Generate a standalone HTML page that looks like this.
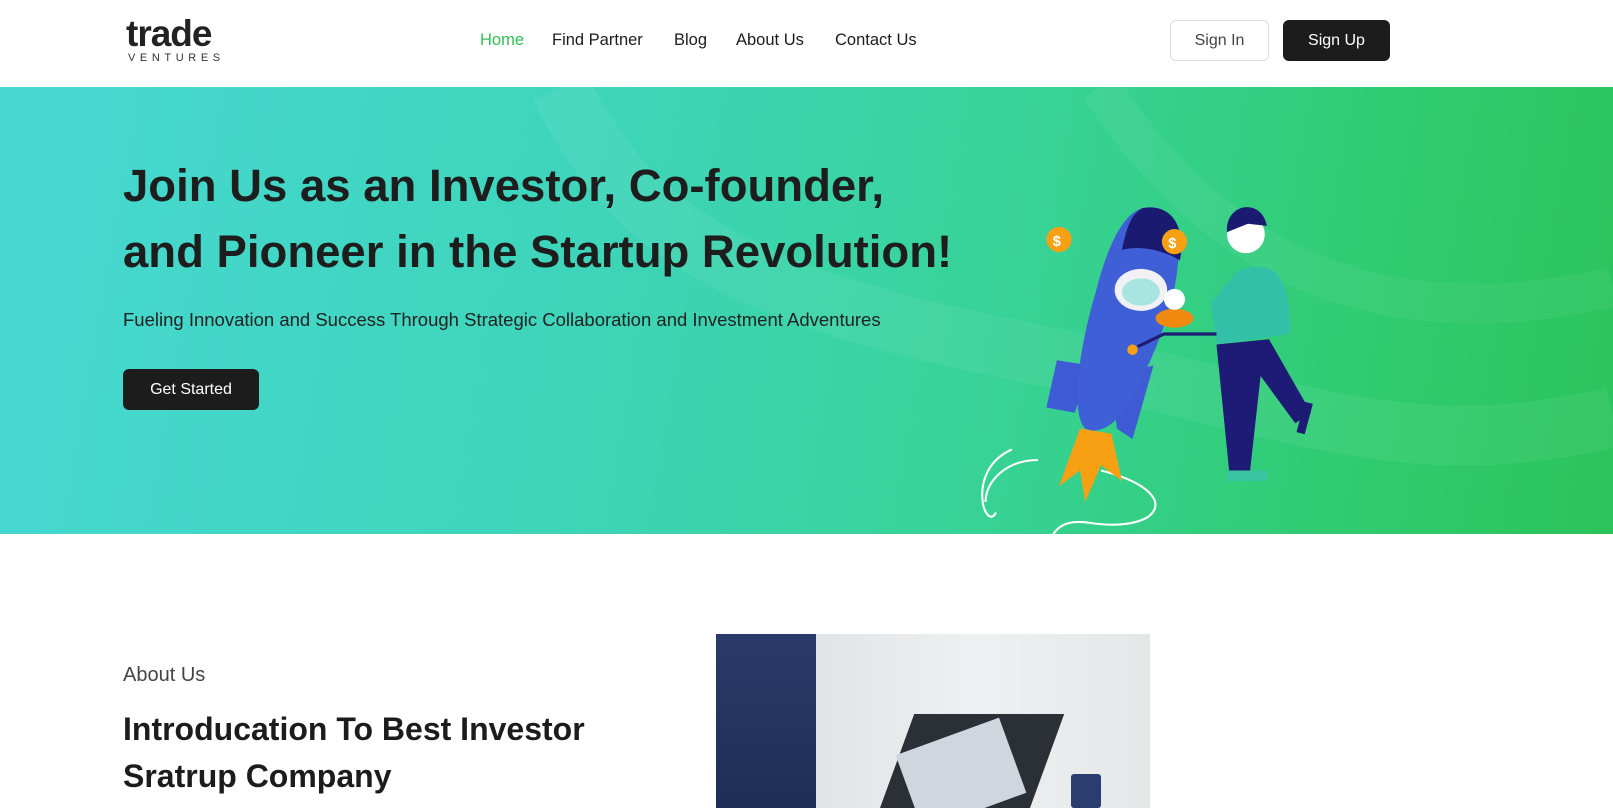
<!DOCTYPE html>
<html><head><style>
*{margin:0;padding:0;box-sizing:border-box}
body{width:1613px;height:808px;overflow:hidden;font-family:"Liberation Sans",sans-serif;background:#fff;color:#1c1c1c;position:relative}
.nav{position:absolute;top:0;left:0;width:1613px;height:87px;background:#fff}
.nav a{position:absolute;top:31px;font-size:16.5px;color:#1c1c1c;text-decoration:none}
.btn{position:absolute;border-radius:6px;font-size:16px;display:flex;align-items:center;justify-content:center}
.hero{position:absolute;top:87px;left:0;width:1613px;height:447px;background:linear-gradient(100deg,#47d8d2 0%,#3ed5bb 35%,#38d39a 60%,#2fcb6e 85%,#2bc35a 100%);overflow:hidden}
h1{position:absolute;left:123px;top:66px;font-size:45.5px;line-height:66px;font-weight:bold;color:#1d1d1d;white-space:nowrap}
</style></head><body>
<div class="nav">
 <div style="position:absolute;left:126px;top:15px;font-size:37px;font-weight:bold;letter-spacing:-1px;line-height:37px;color:#222">trade</div>
 <div style="position:absolute;left:128px;top:52px;font-size:11px;letter-spacing:4.6px;color:#333">VENTURES</div>
 <a style="left:480px;color:#2fbf55">Home</a>
 <a style="left:552px">Find Partner</a>
 <a style="left:674px">Blog</a>
 <a style="left:736px">About Us</a>
 <a style="left:835px">Contact Us</a>
 <div class="btn" style="left:1170px;top:20px;width:99px;height:41px;border:1px solid #ddd;color:#444">Sign In</div>
 <div class="btn" style="left:1283px;top:20px;width:107px;height:41px;background:#1c1c1c;color:#fff">Sign Up</div>
</div>
<div class="hero">
 <svg width="1613" height="447" style="position:absolute;left:0;top:0">
  <path d="M560 0 C620 120 700 200 1000 260 S1400 380 1613 330" stroke="#ffffff" stroke-opacity=".06" stroke-width="60" fill="none"/>
  <path d="M1100 0 C1200 150 1350 260 1613 200" stroke="#ffffff" stroke-opacity=".05" stroke-width="40" fill="none"/>
  <g transform="translate(975,100) scale(1.05)">
   <path d="M35 250 C-10 270 10 330 20 310 M60 260 C30 260 10 280 10 300" stroke="#fff" stroke-width="2" fill="none"/>
   <path d="M120 270 C200 290 180 330 110 320 C80 315 70 330 70 350" stroke="#fff" stroke-width="2" fill="none"/>
   <polygon points="78,165 110,170 95,215 68,210" fill="#3f5bd4"/>
   <polygon points="130,180 170,170 150,240 135,230" fill="#3f5bd4"/>
   <path d="M100 230 L80 285 L100 270 L105 300 L120 265 L140 280 L130 235 Z" fill="#f8a013"/>
   <path d="M160 20 C210 10 200 100 160 180 C150 210 125 240 105 230 C90 215 100 150 115 100 C125 60 140 25 160 20Z" fill="#3f5fd6"/>
   <path d="M160 20 C195 15 200 50 195 70 C180 60 155 55 140 60 C145 35 150 25 160 20Z" fill="#1a1a70"/>
   <ellipse cx="158" cy="98" rx="25" ry="20" fill="#f0f0f5"/><ellipse cx="158" cy="100" rx="18" ry="13" fill="#a8e5e0"/>
   <circle cx="80" cy="50" r="12" fill="#f7a014"/><text x="74" y="56" font-size="14" fill="#fff" font-weight="bold">$</text>
   <circle cx="190" cy="52" r="12" fill="#f7a014"/><text x="184" y="58" font-size="14" fill="#fff" font-weight="bold">$</text>
   <path d="M250 80 C280 70 300 75 300 140 L230 150 L225 110 Z" fill="#33c0a8"/>
   <circle cx="258" cy="45" r="18" fill="#fff"/><path d="M240 43 C238 15 273 10 278 37 L260 35 Z" fill="#1a1a70"/>
   <path d="M230 150 L280 145 L320 215 L305 225 L272 180 L262 270 L242 270 Z" fill="#1d1b75"/>
   <ellipse cx="190" cy="125" rx="18" ry="9" fill="#f08a10"/><circle cx="190" cy="107" r="10" fill="#fff"/>
   <circle cx="150" cy="155" r="5" fill="#f7a014"/><path d="M155 152 L180 140 L230 140" stroke="#1d1b75" stroke-width="3" fill="none"/>
   <rect x="240" y="270" width="38" height="10" fill="#3bc4a0"/>
   <rect x="310" y="205" width="8" height="30" fill="#1d1b75" transform="rotate(15 314 220)"/>
  </g>
 </svg>
 <h1>Join Us as an Investor, Co-founder,<br>and Pioneer in the Startup Revolution!</h1>
 <div style="position:absolute;left:123px;top:222px;font-size:18.5px;color:#222;white-space:nowrap">Fueling Innovation and Success Through Strategic Collaboration and Investment Adventures</div>
 <div class="btn" style="left:123px;top:282px;width:136px;height:41px;background:#1c1c1c;color:#fff">Get Started</div>
</div>
<div style="position:absolute;left:123px;top:664px;font-size:20px;color:#444">About Us</div>
<div style="position:absolute;left:123px;top:706px;font-size:32px;line-height:47px;font-weight:bold;color:#1c1c1c">Introducation To Best Investor<br>Sratrup Company</div>
<div style="position:absolute;left:716px;top:634px;width:434px;height:174px;overflow:hidden;background:linear-gradient(90deg,#d9dde0,#eef0f1 60%,#e4e6e8)">
 <div style="position:absolute;left:0;top:0;width:100px;height:174px;background:linear-gradient(180deg,#2a3a6a,#1f2e55)"></div>
 <div style="position:absolute;left:180px;top:80px;width:150px;height:100px;background:#2b2f36;transform:skewX(-20deg)"></div>
 <div style="position:absolute;left:190px;top:100px;width:110px;height:80px;background:#cfd6de;transform:rotate(-20deg)"></div>
 <div style="position:absolute;left:355px;top:140px;width:30px;height:34px;background:#2a3c70;border-radius:3px"></div>
</div>
</body></html>
